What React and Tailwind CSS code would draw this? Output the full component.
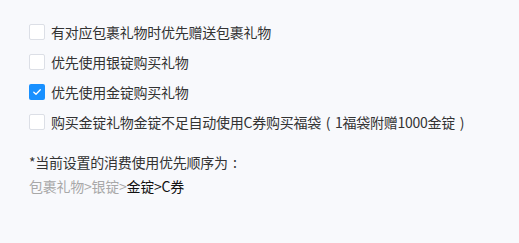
function P({ children }) {
  return <span className="inline-block w-[14px] text-center">{children}</span>;
}

export default function App() {
  const rows = [
    { label: "有对应包裹礼物时优先赠送包裹礼物", checked: false },
    { label: "优先使用银锭购买礼物", checked: false },
    { label: "优先使用金锭购买礼物", checked: true },
    {
      label: (
        <>
          购买金锭礼物金锭不足自动使用C券购买福袋<P>(</P>1福袋附赠1000金锭<P>)</P>
        </>
      ),
      checked: false,
    },
  ];
  return (
    <div
      lang="zh-CN"
      className="w-[519px] h-[243px] bg-[#f8f9fc] pl-[29px] pt-[17px] text-[14px] text-[#333333]"
      style={{ fontFamily: '"Noto Sans CJK SC", "Noto Sans", sans-serif' }}
    >
      <div className="flex flex-col">
        {rows.map((r, i) => (
          <div key={i} className="flex items-center h-[30px] gap-[6px]">
            {r.checked ? (
              <div className="w-[16px] h-[16px] rounded-[2px] bg-[#1890ff] flex items-center justify-center">
                <svg width="10" height="10" viewBox="0 0 10 10" fill="none">
                  <path d="M1.8 5.2 L4 7.3 L8.3 2.8" stroke="white" strokeWidth="1.3" strokeLinecap="round" strokeLinejoin="round" />
                </svg>
              </div>
            ) : (
              <div className="w-[16px] h-[16px] rounded-[2px] border border-[#dcdfe6] bg-white" />
            )}
            <span className="leading-[30px] tracking-[-0.25px]">{r.label}</span>
          </div>
        ))}
      </div>
      <div className="mt-[13px] leading-[24px] tracking-[-0.25px]">
        *当前设置的消费使用优先顺序为<P>:</P>
      </div>
      <div className="leading-[24px] tracking-[-0.25px]">
        <span className="text-[#a8a8a8]">包裹礼物&gt;银锭&gt;</span>
        <span className="text-[#111111]">金锭&gt;C券</span>
      </div>
    </div>
  );
}
